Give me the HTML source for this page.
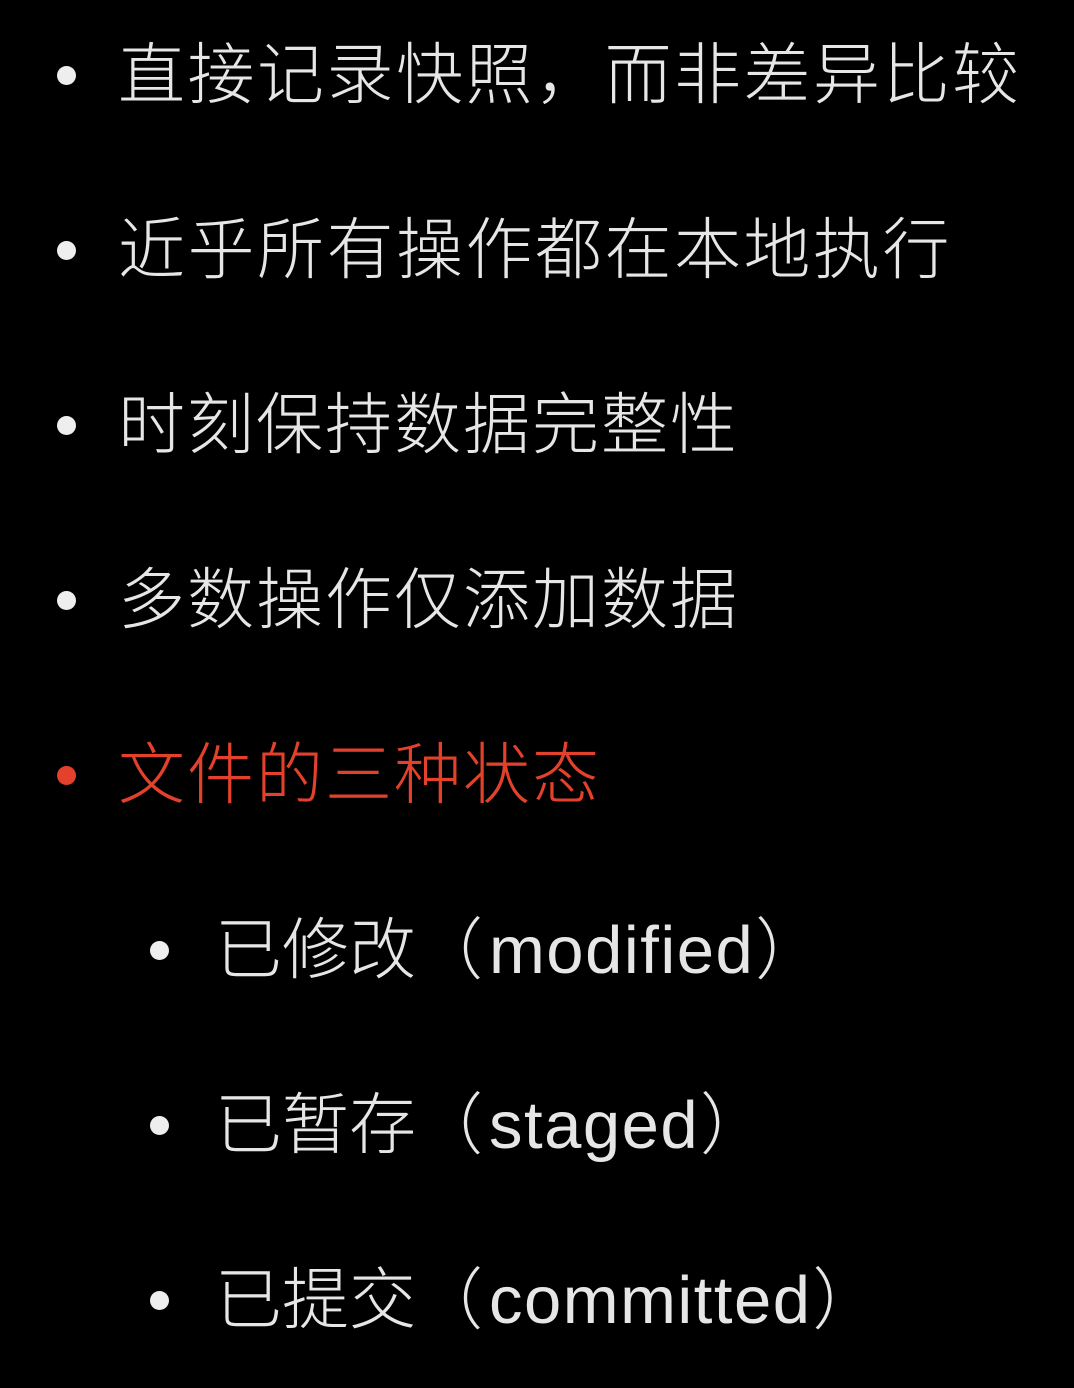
<!DOCTYPE html>
<html><head><meta charset="utf-8"><style>
html,body{margin:0;padding:0;background:#000;width:1074px;height:1384px;overflow:hidden}
.l{position:absolute;left:0;height:175px;line-height:175px;font-family:"Liberation Sans","Noto Sans CJK SC",sans-serif;font-weight:300;font-size:67px;color:#e6e6e6;white-space:nowrap}
.b{position:absolute;width:19px;height:19px;border-radius:50%;background:#eee;top:78px}
.t{position:absolute;left:118px;top:0}
.s .b{left:150px}.s .t{left:215px}
.m .b{left:57px}
.r{color:#e3412c}.r .b{background:#e3412c}
.e{letter-spacing:1.5px;margin-left:6px;margin-right:1px}
</style></head><body>
<div class="l m" style="top:-12px"><div class="b"></div><div class="t" style="letter-spacing:2.5px">直接记录快照，而非差异比较</div></div>
<div class="l m" style="top:163px"><div class="b"></div><div class="t" style="letter-spacing:2.5px">近乎所有操作都在本地执行</div></div>
<div class="l m" style="top:338px"><div class="b"></div><div class="t" style="letter-spacing:2px">时刻保持数据完整性</div></div>
<div class="l m" style="top:513px"><div class="b"></div><div class="t" style="letter-spacing:2px">多数操作仅添加数据</div></div>
<div class="l m r" style="top:688px"><div class="b"></div><div class="t" style="letter-spacing:2px">文件的三种状态</div></div>
<div class="l s" style="top:863px"><div class="b"></div><div class="t">已修改（<span class="e">modified</span>）</div></div>
<div class="l s" style="top:1038px"><div class="b"></div><div class="t">已暂存（<span class="e">staged</span>）</div></div>
<div class="l s" style="top:1213px"><div class="b"></div><div class="t">已提交（<span class="e">committed</span>）</div></div>
</body></html>
